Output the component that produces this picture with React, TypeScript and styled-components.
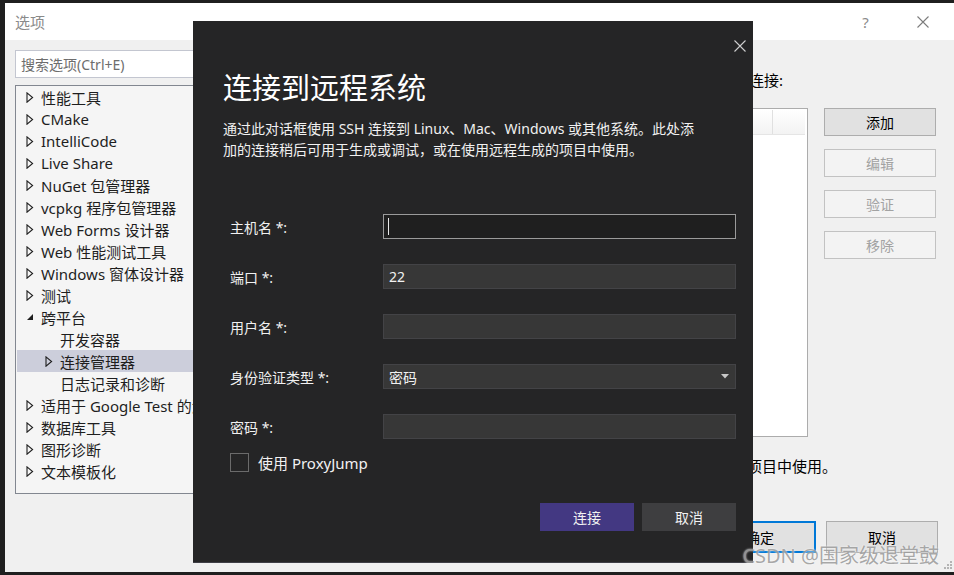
import styled, { createGlobalStyle } from 'styled-components';

const GlobalStyle = createGlobalStyle`
  html, body {
    margin: 0;
    padding: 0;
    background: #1f1f1f;
  }
  body {
    font-family: "Noto Sans", "Noto Sans CJK SC", sans-serif;
  }
  * {
    box-sizing: border-box;
  }
`;

const Screen = styled.div`
  position: relative;
  width: 954px;
  height: 575px;
  padding: 3px 0 3px 5px;
  background: #1f1f1f;
  overflow: hidden;
`;

const Window = styled.div`
  position: relative;
  height: 569px;
  display: flex;
  flex-direction: column;
  background: #f0f0f0;
`;

const TitleBar = styled.div`
  height: 37px;
  flex-shrink: 0;
  display: flex;
  align-items: center;
  padding-left: 10px;
  padding-right: 3px;
  background: #ffffff;
`;

const WindowTitle = styled.div`
  flex: 1;
  font-size: 15px;
  color: #8a8a8a;
`;

const TitleButton = styled.div`
  width: 57px;
  height: 37px;
  display: flex;
  align-items: center;
  justify-content: center;
  font-size: 15px;
  color: #8a8a8a;
`;

const Body = styled.div`
  flex: 1;
  display: flex;
  gap: 3px;
  padding: 10px 18px 0 10px;
`;

const LeftColumn = styled.div`
  width: 195px;
  display: flex;
  flex-direction: column;
`;

const SearchBox = styled.div`
  height: 28px;
  display: flex;
  align-items: center;
  padding-left: 5px;
  border: 1px solid #c3c6d0;
  background: #ffffff;
  font-size: 14px;
  color: #6d6d6d;
`;

const Tree = styled.div`
  margin-top: 7px;
  height: 409px;
  padding: 0 1px 1px;
  border: 1px solid #828790;
  background: #f5f5f5;
  overflow: hidden;
`;

const TreeRow = styled.div<{ $level: number; $selected?: boolean }>`
  height: 22px;
  display: flex;
  align-items: center;
  padding-left: ${p => 9 + p.$level * 19}px;
  background: ${p => (p.$selected ? '#cccedb' : 'transparent')};
  white-space: nowrap;
  font-size: 15px;
  color: #1e1e1e;
`;

const Expander = styled.span`
  width: 15px;
  flex-shrink: 0;
  display: flex;
  align-items: center;
`;

const RightPanel = styled.div`
  flex: 1;
  display: flex;
  flex-direction: column;
  padding-top: 20px;
`;

const PageLabel = styled.div`
  width: 570px;
  height: 20px;
  line-height: 20px;
  text-align: right;
  white-space: nowrap;
  font-size: 15px;
  color: #000;
`;

const ListRow = styled.div`
  margin-top: 18px;
  height: 329px;
  display: flex;
  gap: 16px;
`;

const ListBox = styled.div`
  width: 595px;
  padding: 1px 2px 1px 1px;
  border: 1px solid #acacac;
  background: #ffffff;
`;

const ListHeader = styled.div`
  height: 25px;
  display: grid;
  grid-template-columns: 1fr 32px;
  border-bottom: 1px solid #e5e5e5;
  background: linear-gradient(#ffffff, #f3f3f3);
`;

const HeaderCell = styled.div`
  border-right: 1px solid #e0e0e0;
`;

const ButtonColumn = styled.div`
  width: 112px;
  display: flex;
  flex-direction: column;
  gap: 13px;
`;

const SideButton = styled.div<{ $disabled?: boolean }>`
  height: 28px;
  display: flex;
  align-items: center;
  justify-content: center;
  border: 1px solid ${p => (p.$disabled ? '#c2c2c2' : '#adadad')};
  background: ${p => (p.$disabled ? '#f3f3f3' : '#e1e1e1')};
  font-size: 14px;
  color: ${p => (p.$disabled ? '#a2a2a2' : '#000')};
`;

const PageNote = styled.div`
  margin-top: 19px;
  width: 624px;
  line-height: 20px;
  text-align: right;
  white-space: nowrap;
  font-size: 15px;
  color: #000;
`;

const FooterRow = styled.div`
  margin-top: 45px;
  margin-right: -2px;
  display: flex;
  justify-content: flex-end;
  gap: 10px;
`;

const FooterButton = styled.div<{ $primary?: boolean }>`
  width: 112px;
  height: 32px;
  display: flex;
  align-items: center;
  justify-content: center;
  border: ${p => (p.$primary ? '2px solid #0078d7' : '1px solid #adadad')};
  background: #e1e1e1;
  font-size: 14px;
  color: #000;
`;

const Grip = styled.svg`
  position: absolute;
  right: 2px;
  bottom: 3px;
`;

/* modal dialog */

const Dialog = styled.div`
  position: absolute;
  left: 188px;
  top: 18px;
  width: 560px;
  height: 542px;
  display: flex;
  flex-direction: column;
  padding: 13px 17px 0 30px;
  background: #252526;
  border-bottom: 1px solid #3f3f46;
  color: #f1f1f1;
`;

const CloseRow = styled.div`
  height: 24px;
  display: flex;
  justify-content: flex-end;
  margin-right: -16px;
`;

const CloseButton = styled.div`
  width: 24px;
  height: 24px;
  display: flex;
  align-items: center;
  justify-content: center;
`;

const DialogTitle = styled.h1`
  margin: 10px 0 0;
  height: 40px;
  line-height: 40px;
  font-size: 29px;
  font-weight: 400;
  color: #ffffff;
`;

const DialogText = styled.p`
  margin: 10px 0 0;
  line-height: 21px;
  font-size: 14px;
  color: #f1f1f1;
`;

const Form = styled.div`
  margin-top: 54px;
  display: grid;
  grid-template-columns: 160px 1fr;
  grid-auto-rows: 25px;
  row-gap: 25px;
`;

const FieldLabel = styled.label`
  display: flex;
  align-items: center;
  padding-left: 7px;
  font-size: 14px;
  color: #f1f1f1;
`;

const Field = styled.div<{ $focused?: boolean }>`
  position: relative;
  display: flex;
  align-items: center;
  padding-left: 5px;
  border: 1px solid ${p => (p.$focused ? '#9a9a9a' : '#434346')};
  background: ${p => (p.$focused ? '#1f1f1f' : '#373737')};
  font-size: 14px;
  color: #f1f1f1;
`;

const Caret = styled.span`
  width: 1px;
  height: 17px;
  margin-left: -1px;
  background: #e8e8e8;
`;

const FieldValue = styled.span`
  flex: 1;
`;

const DropArrow = styled.svg`
  margin-right: 6px;
`;

const CheckRow = styled.div`
  margin-top: 14px;
  height: 19px;
  display: flex;
  align-items: center;
  gap: 9px;
  padding-left: 7px;
  font-size: 15px;
  color: #f1f1f1;
`;

const CheckBox = styled.span`
  width: 19px;
  height: 19px;
  border: 1px solid #6b6b6b;
`;

const DialogButtons = styled.div`
  margin-top: 31px;
  display: flex;
  justify-content: flex-end;
  gap: 8px;
`;

const DialogButton = styled.div<{ $primary?: boolean }>`
  width: 94px;
  height: 28px;
  display: flex;
  align-items: center;
  justify-content: center;
  background: ${p => (p.$primary ? '#433882' : '#3e3e40')};
  font-size: 14px;
  color: #f1f1f1;
`;

const Watermark = styled.div`
  position: absolute;
  right: 15px;
  bottom: 7px;
  font-size: 20px;
  line-height: 24px;
  color: rgba(140, 140, 140, 0.75);
  text-shadow: 0 0 2px rgba(255, 255, 255, 0.9);
  white-space: nowrap;
`;

type TreeItem = {
  label: string;
  level: number;
  kind: 'closed' | 'open' | 'leaf';
  selected?: boolean;
};

const treeItems: TreeItem[] = [
  { label: '性能工具', level: 0, kind: 'closed' },
  { label: 'CMake', level: 0, kind: 'closed' },
  { label: 'IntelliCode', level: 0, kind: 'closed' },
  { label: 'Live Share', level: 0, kind: 'closed' },
  { label: 'NuGet 包管理器', level: 0, kind: 'closed' },
  { label: 'vcpkg 程序包管理器', level: 0, kind: 'closed' },
  { label: 'Web Forms 设计器', level: 0, kind: 'closed' },
  { label: 'Web 性能测试工具', level: 0, kind: 'closed' },
  { label: 'Windows 窗体设计器', level: 0, kind: 'closed' },
  { label: '测试', level: 0, kind: 'closed' },
  { label: '跨平台', level: 0, kind: 'open' },
  { label: '开发容器', level: 1, kind: 'leaf' },
  { label: '连接管理器', level: 1, kind: 'closed', selected: true },
  { label: '日志记录和诊断', level: 1, kind: 'leaf' },
  { label: '适用于 Google Test 的测试适配器', level: 0, kind: 'closed' },
  { label: '数据库工具', level: 0, kind: 'closed' },
  { label: '图形诊断', level: 0, kind: 'closed' },
  { label: '文本模板化', level: 0, kind: 'closed' },
];

const fields = [
  { label: '主机名 *:', value: '', focused: true },
  { label: '端口 *:', value: '22' },
  { label: '用户名 *:', value: '' },
  { label: '身份验证类型 *:', value: '密码', dropdown: true },
  { label: '密码 *:', value: '' },
];

const CrossIcon = ({ size, color }: { size: number; color: string }) => (
  <svg width={size} height={size} viewBox="0 0 12 12">
    <path d="M0.5 0.5 L11.5 11.5 M11.5 0.5 L0.5 11.5" stroke={color} strokeWidth="1.1" />
  </svg>
);

const ExpandGlyph = ({ kind }: { kind: TreeItem['kind'] }) => {
  if (kind === 'leaf') return null;
  if (kind === 'open') {
    return (
      <svg width="8" height="8" viewBox="0 0 8 8">
        <path d="M7 1 L7 7 L1 7 Z" fill="#1e1e1e" />
      </svg>
    );
  }
  return (
    <svg width="8" height="11" viewBox="0 0 8 11">
      <path d="M1 0.8 L6.6 5.5 L1 10.2 Z" fill="none" stroke="#1e1e1e" strokeWidth="1.1" />
    </svg>
  );
};

const App = () => {
  return (
    <Screen>
      <GlobalStyle />
      <Window>
        <TitleBar>
          <WindowTitle>选项</WindowTitle>
          <TitleButton>?</TitleButton>
          <TitleButton>
            <CrossIcon size={12} color="#7c7c7c" />
          </TitleButton>
        </TitleBar>
        <Body>
          <LeftColumn>
            <SearchBox>搜索选项(Ctrl+E)</SearchBox>
            <Tree>
              {treeItems.map(item => (
                <TreeRow key={item.label} $level={item.level} $selected={item.selected}>
                  <Expander>
                    <ExpandGlyph kind={item.kind} />
                  </Expander>
                  {item.label}
                </TreeRow>
              ))}
            </Tree>
          </LeftColumn>
          <RightPanel>
            <PageLabel>管理用于跨平台开发的远程系统连接:</PageLabel>
            <ListRow>
              <ListBox>
                <ListHeader>
                  <HeaderCell />
                  <div />
                </ListHeader>
              </ListBox>
              <ButtonColumn>
                <SideButton>添加</SideButton>
                <SideButton $disabled>编辑</SideButton>
                <SideButton $disabled>验证</SideButton>
                <SideButton $disabled>移除</SideButton>
              </ButtonColumn>
            </ListRow>
            <PageNote>此处添加的连接稍后可用于生成或调试，或在使用远程生成的项目中使用。</PageNote>
            <FooterRow>
              <FooterButton $primary>确定</FooterButton>
              <FooterButton>取消</FooterButton>
            </FooterRow>
          </RightPanel>
        </Body>
        <Grip width="9" height="9" viewBox="0 0 9 9">
          {[
            [7, 1],
            [4, 4],
            [7, 4],
            [1, 7],
            [4, 7],
            [7, 7],
          ].map(([x, y]) => (
            <rect key={`${x}-${y}`} x={x} y={y} width="2" height="2" fill="#b4b4b4" />
          ))}
        </Grip>

        <Dialog>
          <CloseRow>
            <CloseButton>
              <CrossIcon size={12} color="#cfcfcf" />
            </CloseButton>
          </CloseRow>
          <DialogTitle>连接到远程系统</DialogTitle>
          <DialogText>
            通过此对话框使用 SSH 连接到 Linux、Mac、Windows 或其他系统。此处添
            <br />
            加的连接稍后可用于生成或调试，或在使用远程生成的项目中使用。
          </DialogText>
          <Form>
            {fields.map(f => (
              <>
                <FieldLabel key={`${f.label}-l`}>{f.label}</FieldLabel>
                <Field key={`${f.label}-f`} $focused={f.focused}>
                  {f.focused && <Caret />}
                  <FieldValue>{f.value}</FieldValue>
                  {f.dropdown && (
                    <DropArrow width="8" height="5" viewBox="0 0 8 5">
                      <path d="M0 0 L8 0 L4 4.5 Z" fill="#c8c8c8" />
                    </DropArrow>
                  )}
                </Field>
              </>
            ))}
          </Form>
          <CheckRow>
            <CheckBox />
            使用 ProxyJump
          </CheckRow>
          <DialogButtons>
            <DialogButton $primary>连接</DialogButton>
            <DialogButton>取消</DialogButton>
          </DialogButtons>
        </Dialog>
      </Window>
      <Watermark>CSDN @国家级退堂鼓</Watermark>
    </Screen>
  );
};

export default App;
